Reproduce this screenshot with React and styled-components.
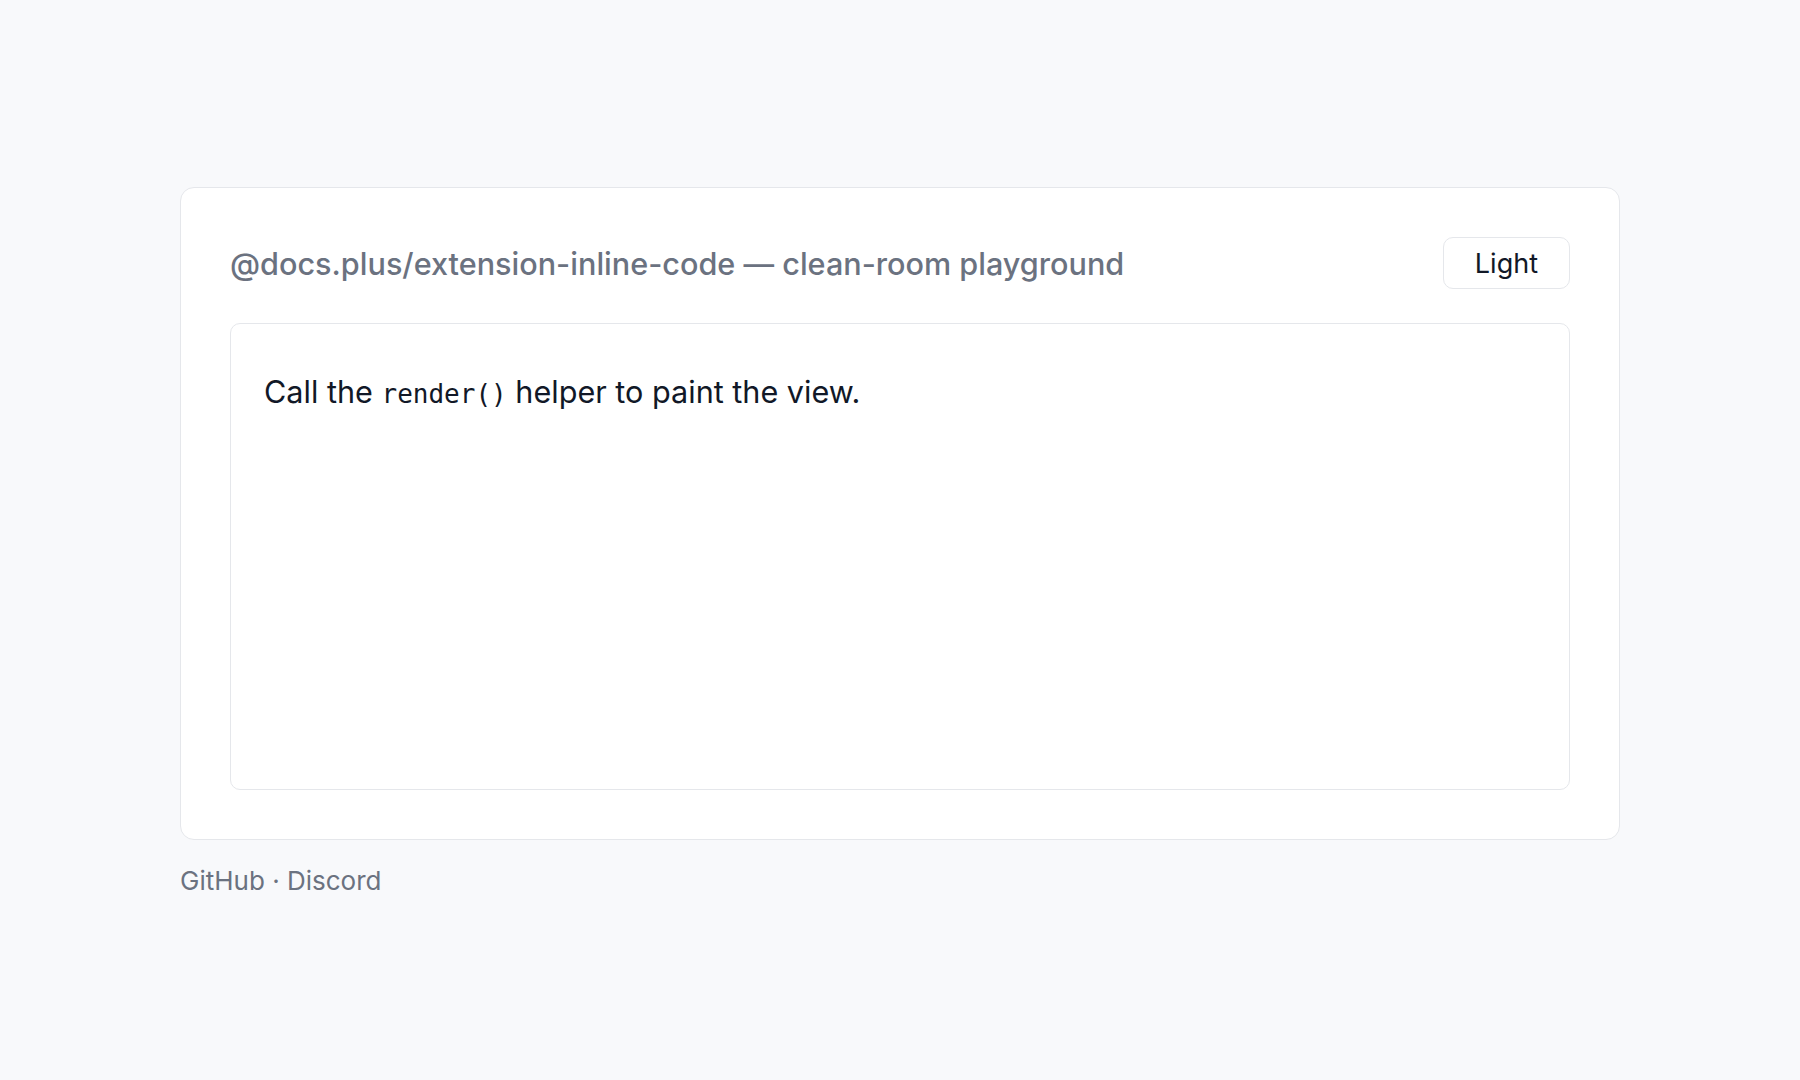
import React from 'react';
import styled, { createGlobalStyle } from 'styled-components';

const GlobalStyle = createGlobalStyle`
  html, body {
    margin: 0;
    padding: 0;
    background: #f8f9fb;
    font-family: Inter, "Noto Sans", sans-serif;
    color: #111827;
  }
`;

const Page = styled.main`
  max-width: 1440px;
  margin: 0 auto;
  padding-top: 187px;
`;

const Card = styled.section`
  background: #ffffff;
  border: 1px solid #e5e7eb;
  border-radius: 14px;
  padding: 49px;
`;

const Header = styled.header`
  display: flex;
  align-items: center;
  justify-content: space-between;
  margin-bottom: 34px;
`;

const Title = styled.h1`
  margin: 0;
  font-size: 30.6px;
  font-weight: 500;
  color: #6b7280;
`;

const ThemeButton = styled.button`
  height: 52px;
  padding: 0 31px;
  border: 1px solid #e5e7eb;
  border-radius: 10px;
  background: #ffffff;
  font-family: Inter, "Noto Sans", sans-serif;
  font-size: 27px;
  color: #111827;
  cursor: pointer;
`;

const Editor = styled.div`
  min-height: 467px;
  box-sizing: border-box;
  border: 1px solid #e5e7eb;
  border-radius: 10px;
  padding: 45px 33px 30px;
  font-size: 30.6px;
  line-height: 1.5;
  color: #111827;
`;

const Paragraph = styled.p`
  margin: 0;
`;

const Code = styled.code`
  font-family: "DejaVu Sans Mono", "Liberation Mono", monospace;
  font-size: 26px;
`;

const Footer = styled.footer`
  margin-top: 25px;
  font-size: 26px;
  color: #6b7280;
`;

const App = () => {
  return (
    <>
      <GlobalStyle />
      <Page>
        <Card>
          <Header>
            <Title>@docs.plus/extension-inline-code — clean-room playground</Title>
            <ThemeButton>Light</ThemeButton>
          </Header>
          <Editor>
            <Paragraph>
              Call the <Code>render()</Code> helper to paint the view.
            </Paragraph>
          </Editor>
        </Card>
        <Footer>GitHub · Discord</Footer>
      </Page>
    </>
  );
};

export default App;
